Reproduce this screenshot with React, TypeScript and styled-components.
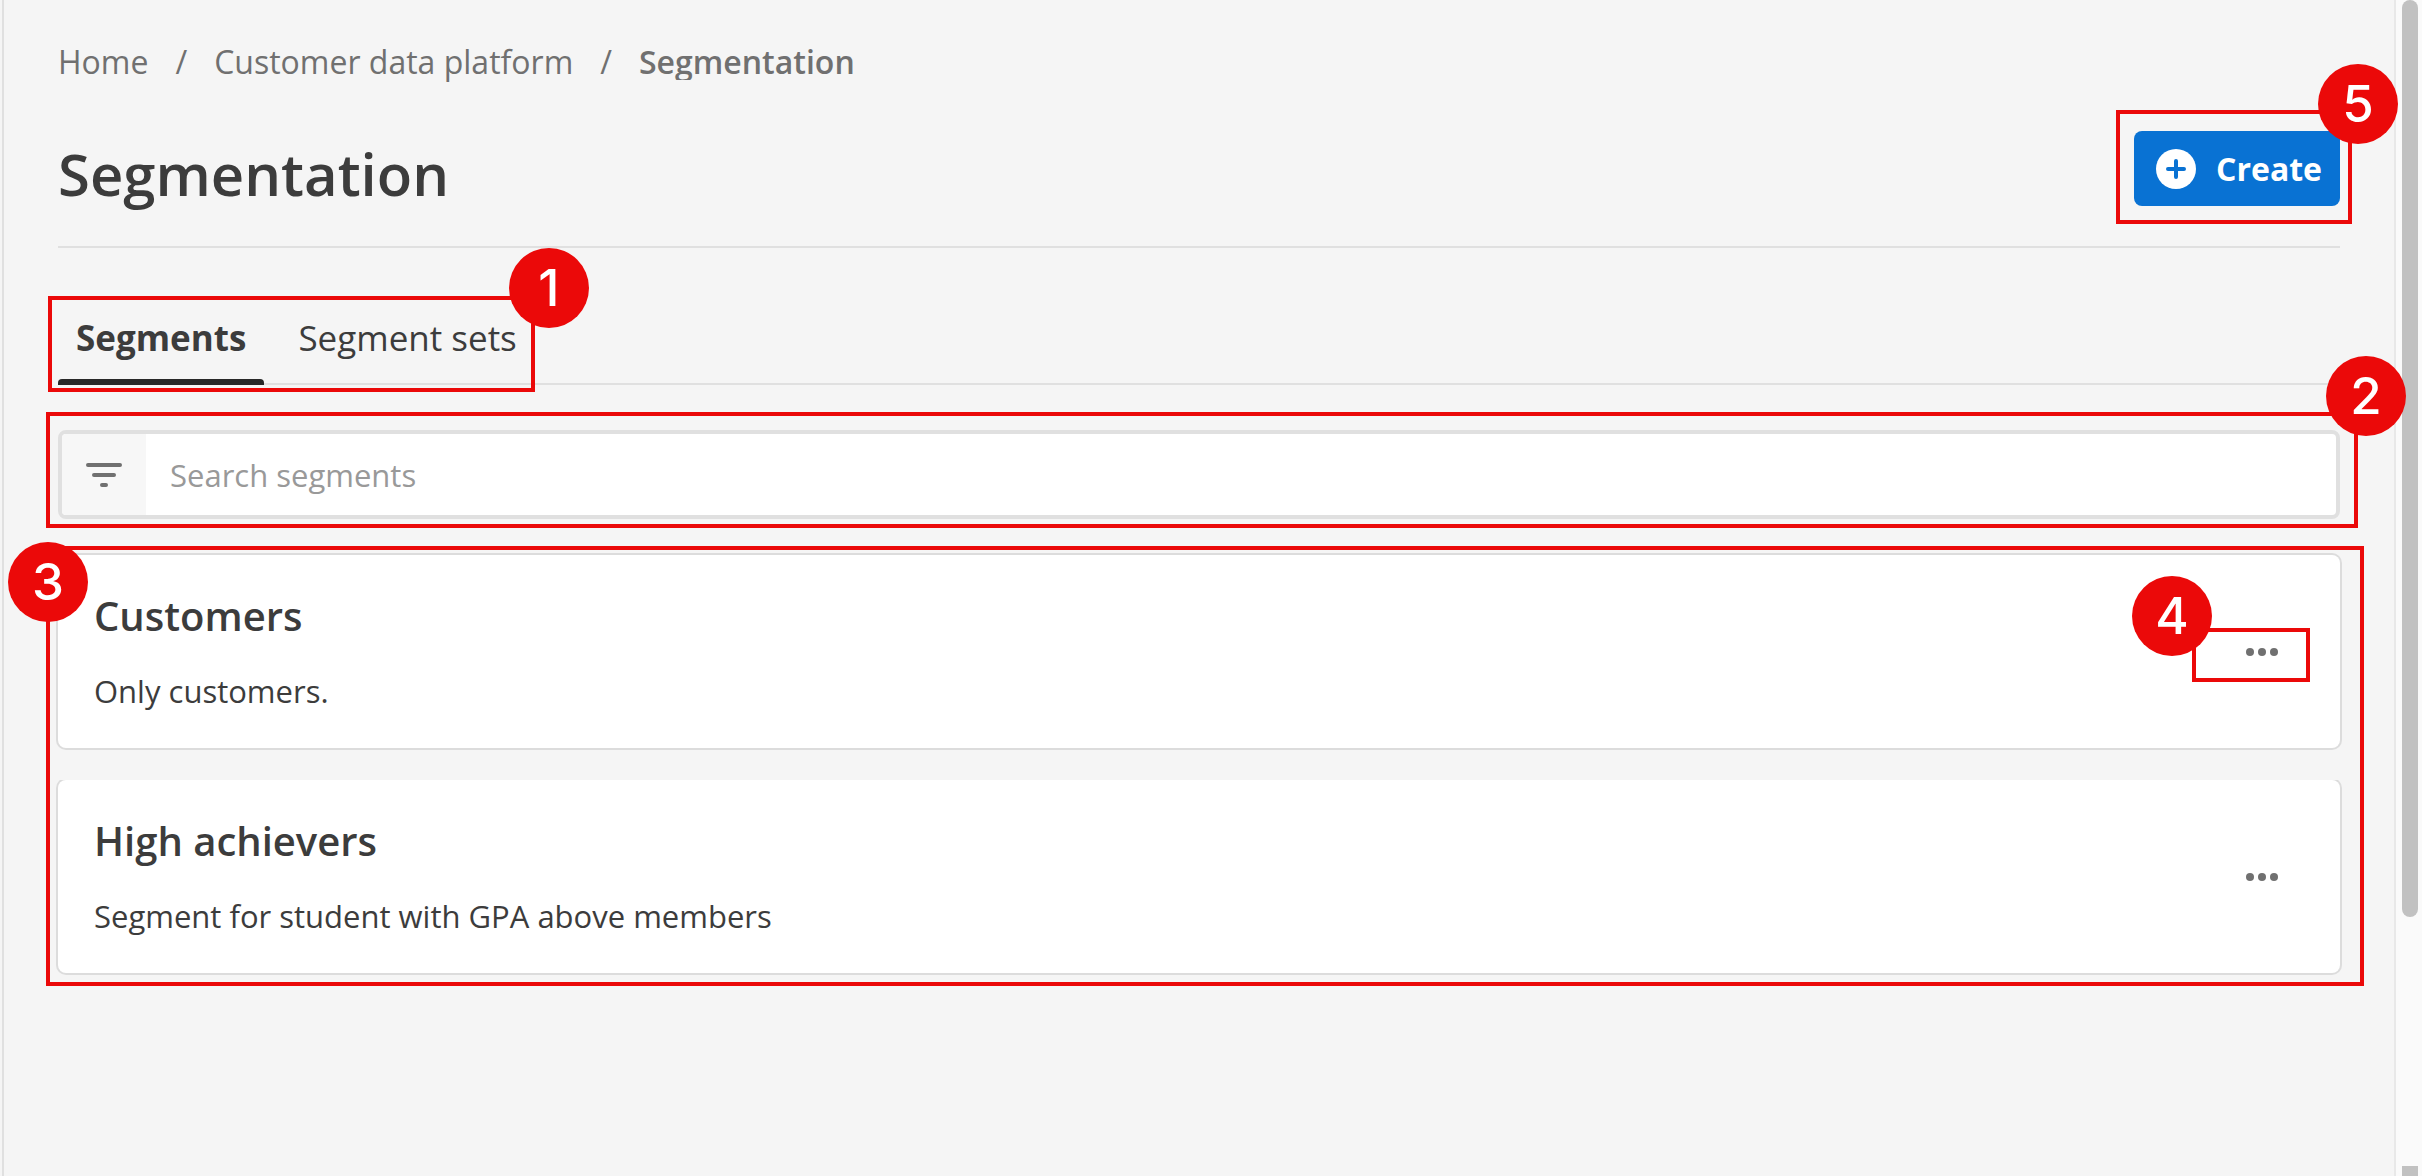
import React from 'react';
import styled, { createGlobalStyle, css } from 'styled-components';

const c = {
  bg: '#f5f5f5',
  line: '#e0e0e0',
  text: '#3c3c3c',
  muted: '#707070',
  blue: '#0972d3',
  red: '#eb0909',
};

const GlobalStyle = createGlobalStyle`
  *, *::before, *::after { box-sizing: border-box; }
  body { margin: 0; background: ${c.bg}; color: ${c.text}; font: 32px/48px "Open Sans", "Noto Sans", sans-serif; }
  h1, h2, p, ol, ul { margin: 0; padding: 0; }
  ol, ul { list-style: none; }
  button, input { font: inherit; color: inherit; border: 0; margin: 0; background: none; }
  button { cursor: pointer; }
`;

const Screen = styled.div`
  display: flex;
  min-height: 100vh;
  padding-left: 2px;
`;

const Page = styled.main`
  flex: 1;
  min-width: 0;
  padding: 38px 54px 48px;
  border-left: 2px solid ${c.line};
`;

const Crumbs = styled.ol`
  display: flex;
  align-items: baseline;
  gap: 27px;
  color: ${c.muted};
`;

const CrumbLink = styled.a`
  color: inherit;
  text-decoration: none;
`;

const CurrentCrumb = styled.li`
  overflow: hidden;
  line-height: 36px;
  font-weight: 600;
`;

const Header = styled.header`
  display: flex;
  align-items: flex-end;
  justify-content: space-between;
  margin-top: 45px;
  padding-bottom: 40px;
  border-bottom: 2px solid ${c.line};
`;

const Title = styled.h1`
  font-size: 58px;
  line-height: 64px;
  font-weight: 600;
`;

const Marked = styled.div<{ $top?: number }>`
  position: relative;
  display: flex;
  margin-top: ${(p) => p.$top ?? 0}px;
`;

const CreateButton = styled.button`
  display: flex;
  align-items: center;
  gap: 20px;
  height: 75px;
  padding: 0 18px 0 22px;
  border-radius: 8px;
  background: ${c.blue};
  color: #fff;
  font-weight: 700;
`;

const Frame = styled.span<{ $inset: string }>`
  position: absolute;
  inset: ${(p) => p.$inset};
  z-index: 1;
  border: 4px solid ${c.red};
  pointer-events: none;
`;

const Badge = styled.span<{ $left?: boolean; $x: number; $y: number }>`
  position: absolute;
  z-index: 2;
  top: ${(p) => p.$y}px;
  ${(p) => (p.$left ? css`left: ${p.$x}px;` : css`right: ${p.$x}px;`)}
  display: grid;
  place-items: center;
  width: 80px;
  height: 80px;
  border-radius: 50%;
  background: ${c.red};
  color: #fff;
  font: 500 51px/80px Inter, "Liberation Sans", sans-serif;
`;

const TabBar = styled.div`
  display: flex;
  margin-top: 56px;
  border-bottom: 2px solid ${c.line};
`;

const TabList = styled(Marked)`
  gap: 16px;
  margin-bottom: -2px;
`;

const Tab = styled.button<{ $active?: boolean }>`
  position: relative;
  height: 81px;
  padding: 0 18px 14px;
  font-size: 35px;
  font-weight: ${(p) => (p.$active ? 700 : 400)};
  ${(p) =>
    p.$active &&
    css`
      &::after {
        content: '';
        position: absolute;
        inset: auto 0 0;
        height: 6px;
        border-radius: 4px 4px 0 0;
        background: #282828;
      }
    `}
`;

const SearchBox = styled.label`
  display: flex;
  flex: 1;
  height: 89px;
  border: 4px solid ${c.line};
  border-radius: 8px;
  background: #fff;
`;

const SearchIcon = styled.span`
  display: grid;
  place-items: center;
  width: 84px;
  border-radius: 4px 0 0 4px;
  background: #f7f7f7;
`;

const SearchInput = styled.input`
  flex: 1;
  min-width: 0;
  padding: 0 24px;
  outline: 0;
  font-size: 31px;
  &::placeholder { color: #999; opacity: 1; }
`;

const List = styled.ul`
  display: grid;
  flex: 1;
  gap: 32px;
`;

const Card = styled.li`
  display: flex;
  align-items: center;
  justify-content: space-between;
  padding: 33px 36px;
  border-radius: 8px;
  background: #fff;
  box-shadow: 0 0 0 2px #dcdcdc;
  & + & { clip-path: inset(0 -2px -2px -2px); }
`;

const CardText = styled.div`
  display: grid;
  gap: 23px;
`;

const CardTitle = styled.h2`
  font-size: 40px;
  line-height: 56px;
  font-weight: 600;
`;

const CardDescription = styled.p`
  font-size: 31px;
`;

const MoreButton = styled.button`
  display: grid;
  place-items: center;
  width: 84px;
  height: 48px;
  padding: 0;
`;

const ScrollTrack = styled.div`
  display: flex;
  flex-direction: column;
  justify-content: space-between;
  width: 28px;
  padding-left: 6px;
  border-left: 2px solid #e8e8e8;
  background: #fafafa;
`;

const Thumb = styled.span<{ $size: string; $radius: string }>`
  width: 16px;
  height: ${(p) => p.$size};
  border-radius: ${(p) => p.$radius};
  background: #c1c1c1;
`;

const PlusIcon = () => (
  <svg width="40" height="40" viewBox="0 0 40 40" aria-hidden="true">
    <circle cx="20" cy="20" r="20" fill="#fff" />
    <path d="M12 20h16M20 12v16" stroke={c.blue} strokeWidth="4" strokeLinecap="round" />
  </svg>
);

const FilterIcon = () => (
  <svg width="36" height="24" viewBox="0 0 36 24" aria-hidden="true">
    <path d="M2 2h32M8 12h20M16 22h4" stroke={c.muted} strokeWidth="4" strokeLinecap="round" />
  </svg>
);

const DotsIcon = () => (
  <svg width="32" height="8" viewBox="0 0 32 8" fill={c.muted} aria-hidden="true">
    <circle cx="4" cy="4" r="4" />
    <circle cx="16" cy="4" r="4" />
    <circle cx="28" cy="4" r="4" />
  </svg>
);

const segments = [
  { name: 'Customers', description: 'Only customers.', step: 4 },
  { name: 'High achievers', description: 'Segment for student with GPA above members' },
];

export default function App() {
  return (
    <Screen>
      <GlobalStyle />
      <Page>
        <nav aria-label="Breadcrumb">
          <Crumbs>
            <li><CrumbLink href="#home">Home</CrumbLink></li>
            <li aria-hidden="true">/</li>
            <li><CrumbLink href="#cdp">Customer data platform</CrumbLink></li>
            <li aria-hidden="true">/</li>
            <CurrentCrumb aria-current="page">Segmentation</CurrentCrumb>
          </Crumbs>
        </nav>

        <Header>
          <Title>Segmentation</Title>
          <Marked>
            <CreateButton type="button"><PlusIcon />Create</CreateButton>
            <Frame $inset="-21px -12px -18px -18px" />
            <Badge $x={-58} $y={-67}>5</Badge>
          </Marked>
        </Header>

        <TabBar>
          <TabList role="tablist">
            <Tab type="button" role="tab" aria-selected="true" $active>Segments</Tab>
            <Tab type="button" role="tab" aria-selected="false">Segment sets</Tab>
            <Frame $inset="-8px 0 -7px -10px" />
            <Badge $x={-54} $y={-56}>1</Badge>
          </TabList>
        </TabBar>

        <Marked $top={45}>
          <SearchBox>
            <SearchIcon><FilterIcon /></SearchIcon>
            <SearchInput type="text" aria-label="Search segments" placeholder="Search segments" />
          </SearchBox>
          <Frame $inset="-18px -18px -9px -12px" />
          <Badge $x={-66} $y={-74}>2</Badge>
        </Marked>

        <Marked $top={36}>
          <List>
            {segments.map((s) => (
              <Card key={s.name}>
                <CardText>
                  <CardTitle>{s.name}</CardTitle>
                  <CardDescription>{s.description}</CardDescription>
                </CardText>
                <Marked>
                  <MoreButton type="button" aria-label={`Actions for ${s.name}`}><DotsIcon /></MoreButton>
                  {s.step && (
                    <>
                      <Frame $inset="0 -6px -6px -28px" />
                      <Badge $x={92} $y={-52}>{s.step}</Badge>
                    </>
                  )}
                </Marked>
              </Card>
            ))}
          </List>
          <Frame $inset="-9px -24px -13px -12px" />
          <Badge $left $x={-50} $y={-13}>3</Badge>
        </Marked>
      </Page>
      <ScrollTrack aria-hidden="true">
        <Thumb $size="78%" $radius="8px" />
        <Thumb $size="10px" $radius="0" />
      </ScrollTrack>
    </Screen>
  );
}
